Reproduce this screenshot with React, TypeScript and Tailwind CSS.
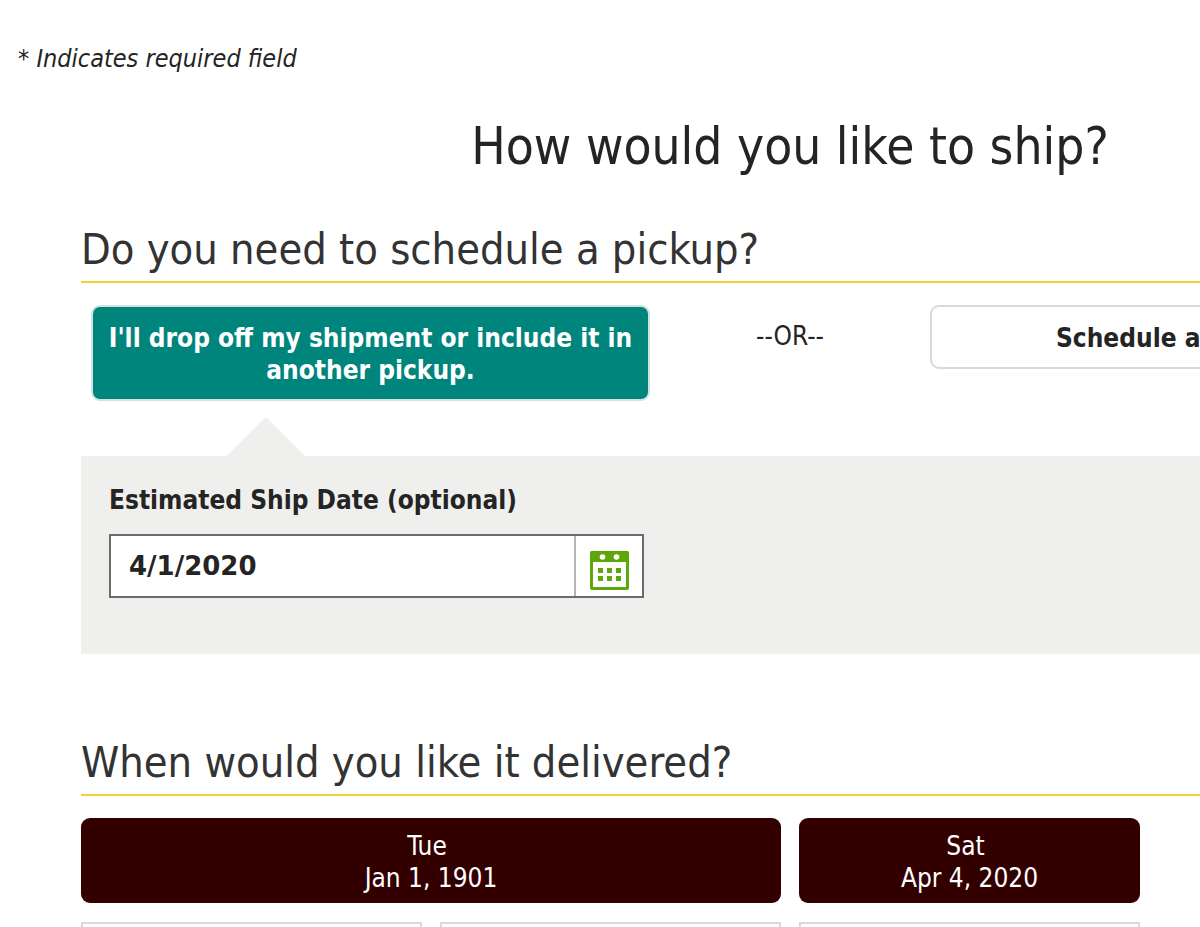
import { useState } from 'react'
import type { ReactNode } from 'react'

interface DeliveryDay {
  weekday: string
  date: string
  options: number
}

const DELIVERY_DAYS: DeliveryDay[] = [
  { weekday: 'Tue', date: 'Jan 1, 1901', options: 2 },
  { weekday: 'Sat', date: 'Apr 4, 2020', options: 1 },
]

function CalendarIcon() {
  return (
    <svg viewBox="0 0 40 40" className="h-10 w-10" aria-hidden="true">
      <rect x="2.5" y="2.5" width="36" height="36" rx="1" fill="#fff" stroke="#5ea70b" strokeWidth="3" />
      <path d="M1 3a2 2 0 0 1 2-2h35a2 2 0 0 1 2 2v9H1z" fill="#5ea70b" />
      <circle cx="13.5" cy="7" r="2.8" fill="#fff" />
      <circle cx="27.5" cy="7" r="2.8" fill="#fff" />
      <path
        d="M9 18h5v5H9zM18 18h5v5h-5zM27 18h5v5h-5zM9 26h5v5H9zM18 26h5v5h-5zM27 26h5v5h-5z"
        fill="#5ea70b"
      />
    </svg>
  )
}

function SectionTitle({ children }: { children: ReactNode }) {
  return (
    <h2 className="border-b-2 border-[#f3d02b] pb-0.5 text-[43px] leading-[60px] text-[#333333]">
      {children}
    </h2>
  )
}

function DayHeader({ day }: { day: DeliveryDay }) {
  return (
    <div className={`rounded-[9px] bg-[#330000] pt-3 pb-[9px] text-center text-white ${day.options === 2 ? 'col-span-2' : ''}`}>
      <p className="pr-2">{day.weekday}</p>
      <p>{day.date}</p>
    </div>
  )
}

export default function App() {
  const [shipDate, setShipDate] = useState('4/1/2020')
  const [dropOff, setDropOff] = useState(true)

  const selected = 'border-[#cfe3e0] bg-[#00857d] text-white'
  const idle = 'border-[#d9d9d6] bg-white text-[#242424]'

  return (
    <div className="h-screen overflow-hidden bg-white font-['DejaVu_Sans_Condensed','DejaVu_Sans',sans-serif] text-[26px] leading-8 text-[#242424]">
      <main className="min-w-[1580px] pt-[43px]">
        <p className="pl-[18px] text-[25px] leading-8 italic">* Indicates required field</p>
        <h1 className="mt-9 text-center text-[51px] leading-[72px]">How would you like to ship?</h1>

        <div className="px-[81px]">
          <section className="mt-9">
            <SectionTitle>Do you need to schedule a pickup?</SectionTitle>
            <div className="mt-[22px] flex items-start px-[10px]">
              <button
                type="button"
                aria-pressed={dropOff}
                onClick={() => setDropOff(true)}
                className={`w-[559px] rounded-[9px] border-2 px-2 pt-[15px] pb-[13px] font-bold ${dropOff ? selected : idle}`}
              >
                I'll drop off my shipment or include it in another pickup.
              </button>
              <span className="flex-1 pt-[15px] text-center">--OR--</span>
              <button
                type="button"
                aria-pressed={!dropOff}
                onClick={() => setDropOff(false)}
                className={`w-[559px] rounded-[9px] border-2 pt-[15px] pb-[13px] pl-[124px] text-left font-bold ${dropOff ? idle : selected}`}
              >
                Schedule a
              </button>
            </div>

            <svg viewBox="0 0 78 39" className="mt-4 ml-[146px] block h-[39px] w-[78px]" aria-hidden="true">
              <path d="M0 39L39 0l39 39z" fill="#efefed" />
            </svg>
            <div className="bg-[#efefed] px-7 pt-7 pb-14">
              <label htmlFor="ship-date" className="block font-bold">
                Estimated Ship Date (optional)
              </label>
              <div className="mt-[18px] flex h-16 w-[535px] border-2 border-[#6b6b6b] bg-white">
                <input
                  id="ship-date"
                  type="text"
                  value={shipDate}
                  onChange={(e) => setShipDate(e.target.value)}
                  className="min-w-0 flex-1 px-[18px] font-['DejaVu_Sans',sans-serif] font-bold outline-none"
                />
                <button
                  type="button"
                  aria-label="Choose a date"
                  className="flex w-[68px] items-center justify-center border-l-2 border-[#b5b5b5] pt-2"
                >
                  <CalendarIcon />
                </button>
              </div>
            </div>
          </section>

          <section className="mt-[78px]">
            <SectionTitle>When would you like it delivered?</SectionTitle>
            <div className="mt-[22px] grid grid-cols-4 gap-x-[18px] gap-y-[19px]">
              {DELIVERY_DAYS.map((day) => (
                <DayHeader key={day.date} day={day} />
              ))}
              <div className="col-start-1 h-40 border-2 border-[#d9d9d6]" />
              <div className="h-40 border-2 border-[#d9d9d6]" />
              <div className="h-40 border-2 border-[#d9d9d6]" />
            </div>
          </section>
        </div>
      </main>
    </div>
  )
}
